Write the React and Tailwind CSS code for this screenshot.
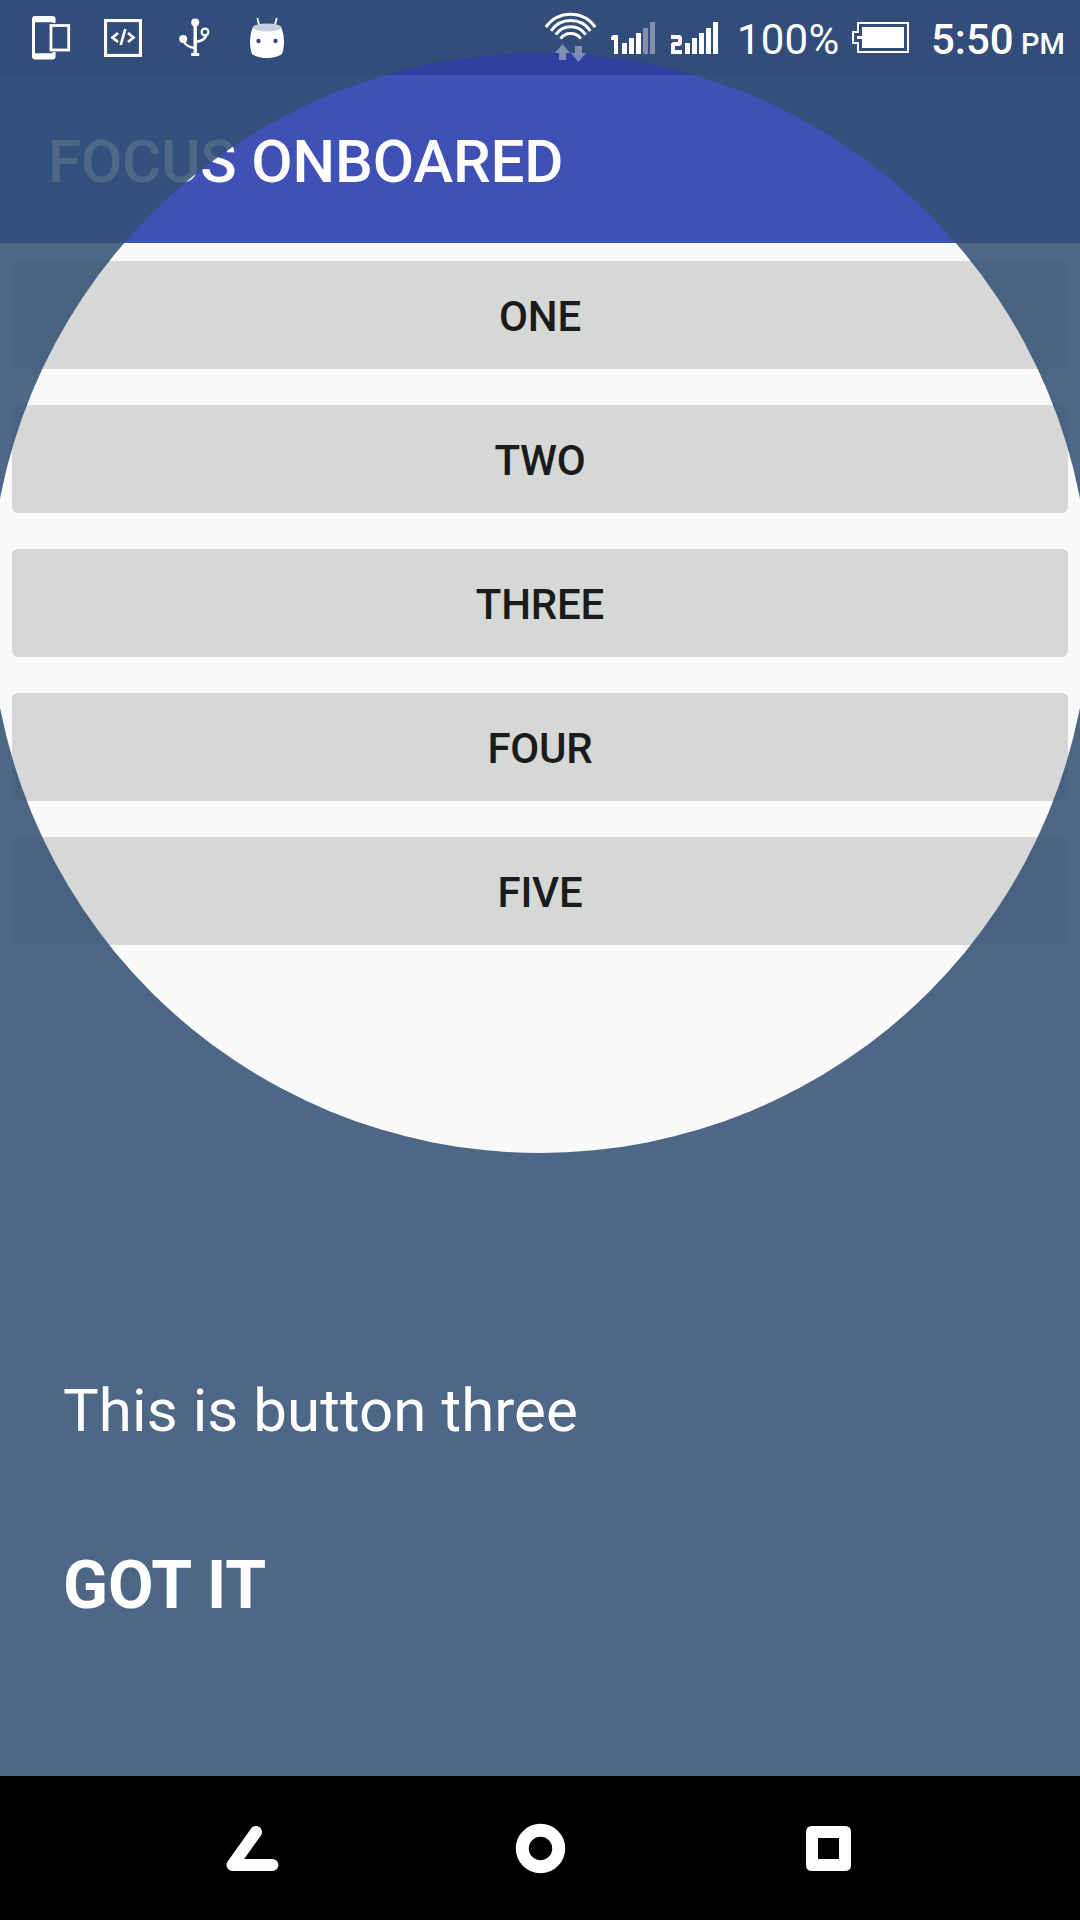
const LABELS = ["ONE", "TWO", "THREE", "FOUR", "FIVE"];

function PhoneIcon() {
  return (
    <svg className="shrink-0" width="42" height="48" viewBox="30 14 42 48">
      <path
        fill="#fff"
        fillRule="evenodd"
        d="M35 16H52.5Q55.5 16 55.5 19V23H52.5V22.3H35V53.3H52.5V52H55.5V56.500Q55.500 59.500 52.500 59.500H35Q32 59.500 32 56.500V19Q32 16 35 16Z"
      />
      <rect x="51" y="25.500" width="17.700" height="24.500" fill="none" stroke="#fff" strokeWidth="2.800" />
    </svg>
  );
}

function CodeIcon() {
  return (
    <svg className="ml-8 shrink-0" width="38" height="38" viewBox="104 19 38 38">
      <rect x="105.500" y="20.500" width="35" height="35" fill="none" stroke="#fff" strokeWidth="3.200" />
      <path d="M118 33L112.500 37.500L118 42M128 33L133.500 37.500L128 42M125.300 29L120.700 45" fill="none" stroke="#fff" strokeWidth="2.700" />
    </svg>
  );
}

function UsbIcon() {
  return (
    <svg className="ml-[36px] shrink-0" width="34" height="42" viewBox="178 17 34 42">
      <g fill="none" stroke="#fff">
        <path d="M195.200 22V55" strokeWidth="3.400" />
        <path d="M183.500 40C185 46 190 47.500 195 48" strokeWidth="2.400" />
        <path d="M195 42C201 41.500 205 39.500 206.500 35" strokeWidth="2.400" />
        <circle cx="205" cy="32" r="3.400" strokeWidth="2.100" />
      </g>
      <g fill="#fff">
        <circle cx="195.200" cy="22.500" r="4" />
        <circle cx="183.200" cy="39" r="4" />
        <rect x="191.200" y="53" width="8" height="3" />
      </g>
    </svg>
  );
}

function DroidIcon() {
  return (
    <svg className="ml-[36px] shrink-0" width="38" height="44" viewBox="248 13 38 44">
      <path d="M257.300 15L259.500 23.500M276.800 15L274.500 23.500" stroke="#fff" strokeWidth="1.800" />
      <path d="M252.500 25Q267 31 281.500 25Q284 31 284 38Q284 46 282 51Q276 55 267 55Q258 55 252 51Q250 46 250 38Q250 31 252.500 25Z" fill="#fff" />
      <ellipse cx="267" cy="24.500" rx="14.500" ry="4" fill="#c9d0dc" />
      <circle cx="258.500" cy="38" r="2.200" fill="#324d78" />
      <circle cx="275.500" cy="38" r="2.200" fill="#324d78" />
    </svg>
  );
}

function WifiIcon() {
  return (
    <svg className="shrink-0" width="54" height="52" viewBox="544 12 54 52">
      <g fill="none" stroke="#fff" strokeWidth="3">
        <path d="M545.900 27.200A30 30 0 0 1 595.200 27.200" />
        <path d="M551 30.800A24 24 0 0 1 590.400 30.800" />
        <path d="M555.700 34.700A18 18 0 0 1 585.700 34.700" />
        <path d="M560.500 38.700A12.500 12.500 0 0 1 580.900 38.700" />
      </g>
      <path d="M562.500 44L570 53H566V60H559V53H555ZM575 46H582V53H586L578.500 62L571 53H575Z" fill="#fff" fillOpacity="0.38" />
    </svg>
  );
}

function SignalOne() {
  return (
    <svg className="ml-[13px] shrink-0" width="44" height="34" viewBox="611 20 44 34" fill="#fff">
      <path d="M613 34H618V53H614V39H611V36Z" />
      <path d="M622 42H627V53H622ZM629 37H634V53H629ZM636 32H641V53H636Z" />
      <path d="M643 27H648V53H643ZM650 21H655V53H650Z" fillOpacity="0.38" />
    </svg>
  );
}

function SignalTwo() {
  return (
    <svg className="ml-[16px] shrink-0" width="47" height="34" viewBox="671 20 47 34" fill="#fff">
      <path d="M671 34H680L682 36V43L680 45H675V49H682V53H671V43L673 41H678V38H671Z" />
      <path d="M685 42H690V53H685ZM692 37H697V53H692ZM699 32H704V53H699ZM706 27H711V53H706ZM713 21H718V53H713Z" />
    </svg>
  );
}

function BatteryIcon() {
  return (
    <svg className="ml-[14px] shrink-0" width="58" height="34" viewBox="852 21 58 34">
      <path d="M858 23H908V52H858V43H853V32H858Z" fill="none" stroke="#fff" strokeWidth="2" />
      <path d="M862 27H904V48H862V39H857V36H862Z" fill="#fff" />
    </svg>
  );
}

function StatusBar() {
  return (
    <div className="absolute inset-x-0 top-0 flex h-[75px] items-center pl-[30px] text-white">
      <PhoneIcon />
      <CodeIcon />
      <UsbIcon />
      <DroidIcon />
      <div className="ml-[258px] flex h-[75px] items-center">
        <WifiIcon />
        <SignalOne />
        <SignalTwo />
        <span className="ml-[19px] w-[101px] pt-1 text-[42px] leading-none tracking-[0.2px] whitespace-nowrap">100%</span>
        <BatteryIcon />
        <span className="ml-[21px] w-[84px] pt-1 text-[42px] leading-none font-medium whitespace-nowrap">5:50</span>
        <span className="ml-[6px] pt-[13px] text-[29px] leading-none font-medium">PM</span>
      </div>
    </div>
  );
}

function NavBar() {
  return (
    <nav className="relative flex h-36 items-center justify-between bg-black px-[222px]">
      <svg width="60" height="60" viewBox="222 1818 60 60">
        <path d="M256 1832L232.500 1865H272.500" fill="none" stroke="#fff" strokeWidth="12" strokeLinecap="round" strokeLinejoin="round" />
      </svg>
      <svg width="60" height="60" viewBox="510 1818 60 60">
        <circle cx="540.500" cy="1848.500" r="18.200" fill="none" stroke="#fff" strokeWidth="13" />
      </svg>
      <svg width="60" height="60" viewBox="798 1818 60 60">
        <path fill="#fff" fillRule="evenodd" d="M812 1826H845Q851 1826 851 1832V1865Q851 1871 845 1871H812Q806 1871 806 1865V1832Q806 1826 812 1826ZM818 1838V1859H839V1838Z" />
      </svg>
    </nav>
  );
}

export default function App() {
  return (
    <div className="relative flex h-[1920px] w-[1080px] flex-col overflow-hidden bg-[#fafafa] font-['Roboto',sans-serif]">
      <div className="h-[75px] shrink-0 bg-[#303f9f]" />
      <header className="flex h-[168px] shrink-0 items-center bg-[#3f51b5] pl-12 text-[60px] font-medium text-white">
        <h1 className="pt-[5px] leading-none tracking-[-0.13px]">FOCUS ONBOARED</h1>
      </header>
      <main className="flex flex-1 flex-col gap-9 px-3 pt-[18px]">
        {LABELS.map((label) => (
          <button key={label} className="h-[108px] rounded-md bg-[#d6d7d7] pt-[3px] text-[42px] leading-none font-medium tracking-[-0.2px] text-[#1b1b1b]">
            {label}
          </button>
        ))}
      </main>

      {/* Scrim with a round spotlight, and the message on top of it */}
      <div className="absolute inset-0 overflow-hidden">
        <div className="absolute top-[53px] -left-[10px] size-[1100px] rounded-full shadow-[0_0_0_1600px_rgba(51,80,117,0.867)]" />
        <div className="absolute top-[1376px] left-[63px] flex flex-col items-start gap-[101px] text-white">
          <p className="text-[60px] leading-[70px] tracking-[0.07px]">This is button three</p>
          <button className="text-[66px] leading-[78px] font-bold">GOT IT</button>
        </div>
      </div>
      <StatusBar />
      <NavBar />
    </div>
  );
}
